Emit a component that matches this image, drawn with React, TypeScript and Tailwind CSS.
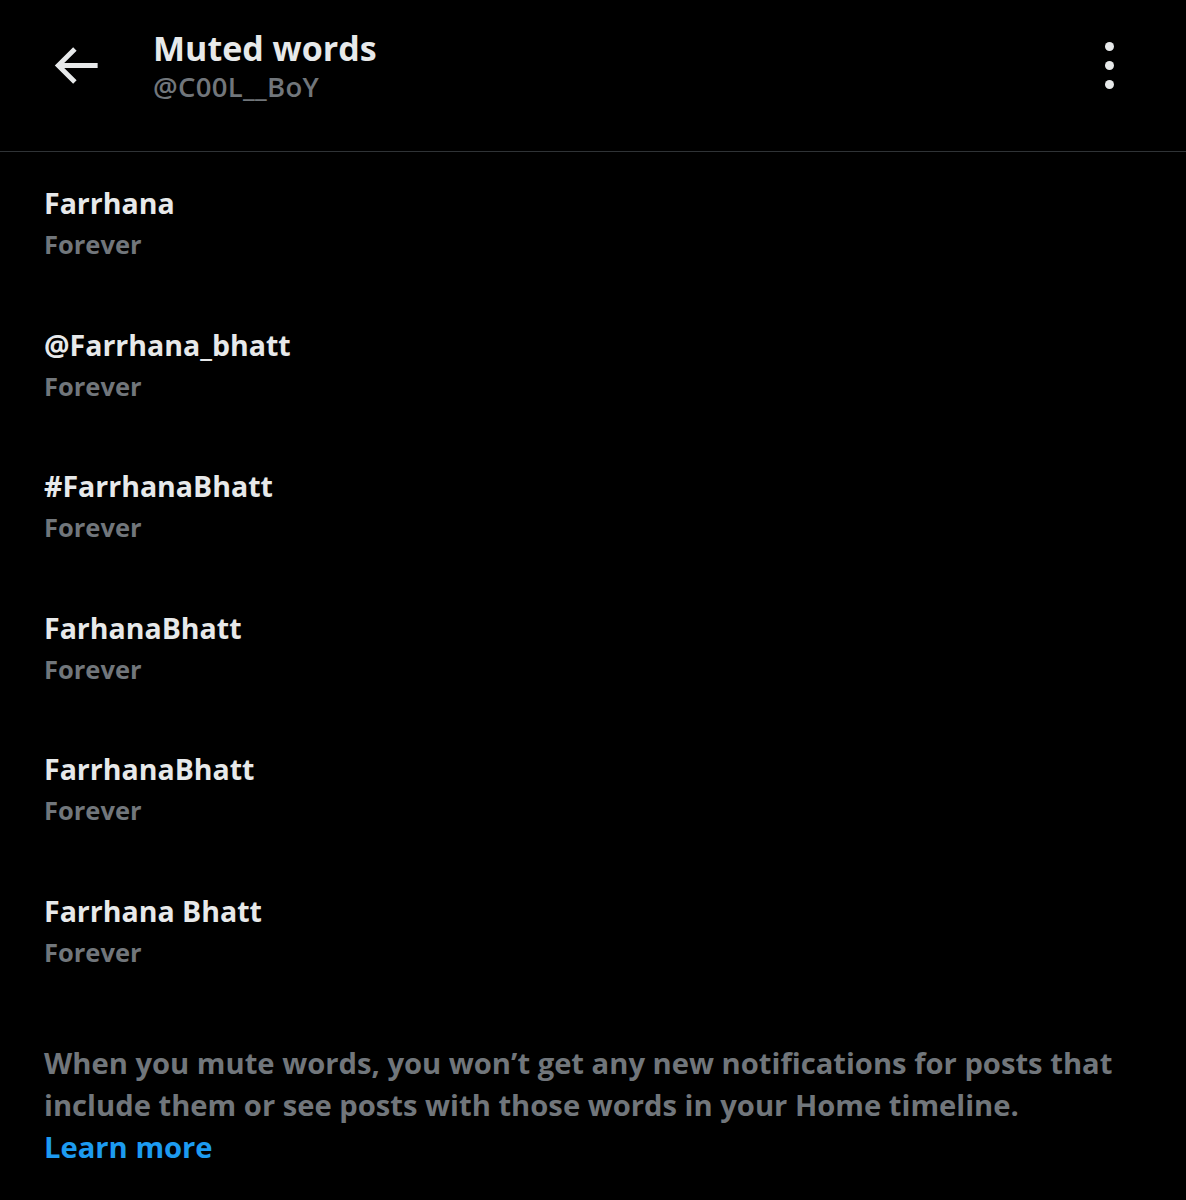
const words = [
  'Farrhana',
  '@Farrhana_bhatt',
  '#FarrhanaBhatt',
  'FarhanaBhatt',
  'FarrhanaBhatt',
  'Farrhana Bhatt',
]

export default function App() {
  return (
    <div className="min-h-[1200px] w-[1186px] bg-black font-['Open_Sans',sans-serif] text-[#e7e9ea]">
      {/* Header */}
      <header className="flex h-[152px] items-start border-b border-[#2f3336] pt-[26px]">
        <div className="flex w-[153px] justify-start pl-[46px] pt-[10px]">
          <svg viewBox="0 0 24 24" className="h-[59px] w-[59px]" fill="currentColor">
            <path d="M7.414 13l5.043 5.04-1.414 1.42L3.586 12l7.457-7.46 1.414 1.42L7.414 11H21v2H7.414z" />
          </svg>
        </div>
        <div className="flex flex-1 flex-col">
          <h1 className="text-[34px] font-bold leading-[44px]">Muted words</h1>
          <span className="text-[27.5px] font-semibold leading-[34px] tracking-[0.3px] text-[#71767b]">@C00L__BoY</span>
        </div>
        <div className="flex w-[81px] flex-col items-start gap-[10px] pt-[16px]">
          <span className="h-[9px] w-[9px] rounded-full bg-[#e7e9ea]" />
          <span className="h-[9px] w-[9px] rounded-full bg-[#e7e9ea]" />
          <span className="h-[9px] w-[9px] rounded-full bg-[#e7e9ea]" />
        </div>
      </header>

      {/* Muted words list */}
      <ul className="flex flex-col pt-[30px]">
        {words.map((w) => (
          <li key={w} className="flex h-[141.6px] flex-col px-[44px]">
            <span className="text-[28.5px] font-bold leading-[42px]">{w}</span>
            <span className="text-[25.5px] font-bold leading-[40px] text-[#71767b]">Forever</span>
          </li>
        ))}
      </ul>

      {/* Footer note */}
      <p className="mt-[10px] px-[44px] text-[29.2px] font-bold leading-[42px] text-[#71767b]">
        When you mute words, you won’t get any new notifications for posts that include them or see posts with those words in your Home timeline.{' '}
        <br />
        <a href="#" className="text-[#1d9bf0]">Learn more</a>
      </p>
    </div>
  )
}
